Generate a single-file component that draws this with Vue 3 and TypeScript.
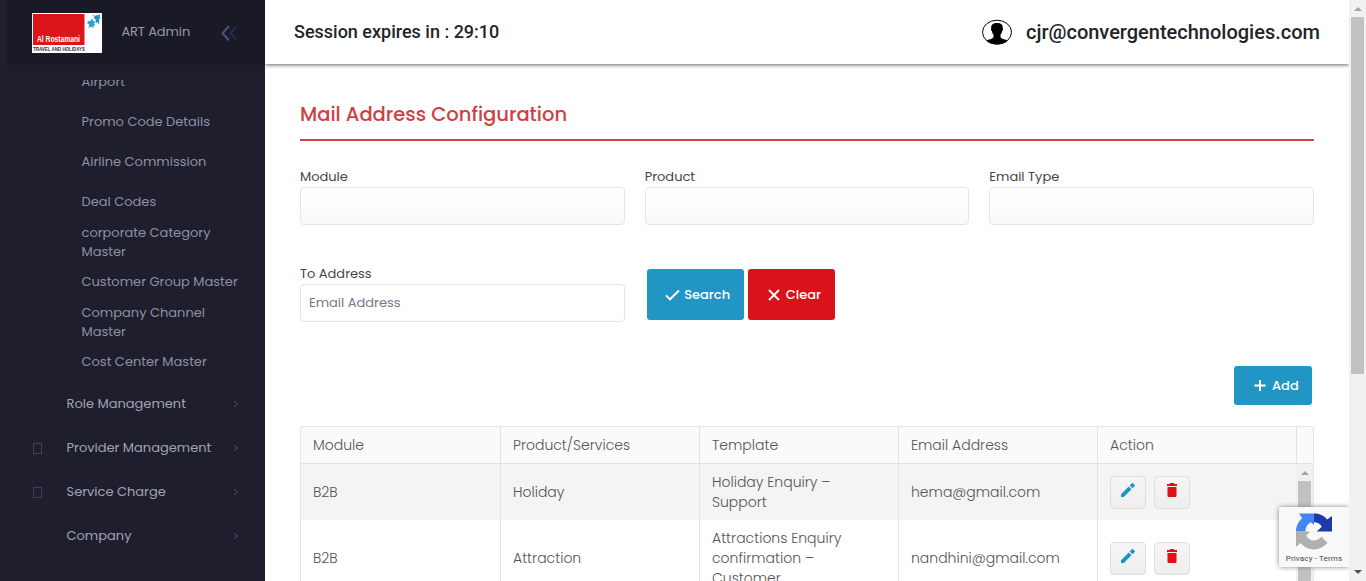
<script setup lang="ts">
interface MenuEntry {
  label: string
  glyph: boolean
}

interface MailRow {
  module: string
  product: string
  template: string
  email: string
}

const subItems: string[] = [
  'Airport',
  'Promo Code Details',
  'Airline Commission',
  'Deal Codes',
  'corporate Category\nMaster',
  'Customer Group Master',
  'Company Channel\nMaster',
  'Cost Center Master',
]

const menu: MenuEntry[] = [
  { label: 'Role Management', glyph: false },
  { label: 'Provider Management', glyph: true },
  { label: 'Service Charge', glyph: true },
  { label: 'Company', glyph: false },
]

const selects: string[] = ['Module', 'Product', 'Email Type']
const columns: string[] = ['Module', 'Product/Services', 'Template', 'Email Address', 'Action']

const rows: MailRow[] = [
  { module: 'B2B', product: 'Holiday', template: 'Holiday Enquiry –\nSupport', email: 'hema@gmail.com' },
  { module: 'B2B', product: 'Attraction', template: 'Attractions Enquiry\nconfirmation –\nCustomer', email: 'nandhini@gmail.com' },
]
</script>

<template>
  <div class="page">
    <aside class="sidebar">
      <div class="brand">
        <svg class="logo" viewBox="0 0 70 40" width="70" height="40">
          <rect width="70" height="40" fill="#fff" />
          <rect x="1" y="1" width="51.5" height="31" fill="#dc151a" />
          <text x="5" y="29" class="logo-name" textLength="43" lengthAdjust="spacingAndGlyphs">Al Rostamani</text>
          <text x="1" y="37.500" class="logo-tag" textLength="52" lengthAdjust="spacingAndGlyphs">TRAVEL AND HOLIDAYS</text>
          <path d="M55 7.500l3.200.7 2.100-2.700 1.200 2.700 3 .3-2.500 2 1.500 2-2.200.3.200 2.700-2.300-2-2.700 1.500.8-3.500-2.500-1 1.700-1.200z" fill="#2ea3cc" />
          <path d="M60 2.200l3.500.6 4.800-1.600-.8 2 1 1.500-1.500 1.800.3 5-2-2.500-.8 1.500-.7-3.500-2-2.300 1-1z" fill="#2491be" />
        </svg>
        <span class="brand-name">ART Admin</span>
        <svg class="collapse" viewBox="0 0 18 18" width="18" height="18" fill="none" stroke-width="2">
          <path d="M9 2.200L2.500 9.200 9 16.200" stroke="#4c4e86" />
          <path d="M16.200 3L10.300 9.200l5.900 6.200" stroke="#2b2b48" />
        </svg>
      </div>
      <nav class="menu">
        <div class="sub-list">
          <a v-for="item in subItems" :key="item" class="sub-item">{{ item }}</a>
        </div>
        <a v-for="entry in menu" :key="entry.label" class="menu-item">
          <span class="menu-glyph"><i v-if="entry.glyph" class="box"></i></span>
          <span class="menu-label">{{ entry.label }}</span>
          <svg class="chevron" viewBox="0 0 6 8" width="6" height="8" fill="none" stroke="#4a4c74"><path d="M1 1l3.500 3L1 7" /></svg>
        </a>
      </nav>
    </aside>

    <main class="main">
      <header class="topbar">
        <span class="session">Session expires in : 29:10</span>
        <div class="user">
          <svg viewBox="0 0 30 26" width="30" height="26">
            <ellipse cx="15" cy="13.200" rx="14.500" ry="12" fill="#fff" stroke="#000" stroke-width="1" />
            <path d="M15 4c4 0 6 1.800 5.800 4.900.4 1.500 0 2.700-.7 3.300-.4 1.900-1 2.900-1.600 3.500v2.600c1.300 1.900 5.200 2.100 7.100 3.400-2.600 2.700-6.500 3.600-10.600 3.600S7 24.400 4.400 21.700c1.900-1.300 5.800-1.500 7.100-3.400v-2.600c-.6-.6-1.200-1.600-1.600-3.500-.7-.6-1.100-1.800-.7-3.300C9 5.800 11 4 15 4z" />
          </svg>
          <span class="user-mail">cjr@convergentechnologies.com</span>
        </div>
      </header>

      <section class="content">
        <h1 class="title">Mail Address Configuration</h1>

        <div class="fields">
          <label v-for="name in selects" :key="name" class="field">
            <span class="field-label">{{ name }}</span>
            <span class="control select"></span>
          </label>
        </div>

        <div class="fields second">
          <label class="field">
            <span class="field-label">To Address</span>
            <input class="control" type="text" placeholder="Email Address" />
          </label>
          <div class="actions">
            <button class="btn search" type="button">
              <svg viewBox="0 0 15 12" width="15" height="12" fill="none" stroke="#fff" stroke-width="1.900"><path d="M1 6.300l4 4L14 1.500" /></svg>
              <span>Search</span>
            </button>
            <button class="btn clear" type="button">
              <svg viewBox="0 0 12 12" width="12" height="12" fill="none" stroke="#fff" stroke-width="1.900"><path d="M1 1l10 10M11 1L1 11" /></svg>
              <span>Clear</span>
            </button>
          </div>
        </div>

        <div class="add-row">
          <button class="btn add" type="button">
            <svg viewBox="0 0 12 12" width="12" height="12" fill="none" stroke="#fff" stroke-width="2"><path d="M6 0v11M.5 5.500h11" /></svg>
            <span>Add</span>
          </button>
        </div>

        <div class="grid">
          <div class="grid-head">
            <div v-for="col in columns" :key="col" class="cell">{{ col }}</div>
            <div class="head-end"></div>
          </div>
          <div class="grid-body">
            <div class="grid-rows">
              <div v-for="row in rows" :key="row.email" class="grid-row">
                <div class="cell">{{ row.module }}</div>
                <div class="cell">{{ row.product }}</div>
                <div class="cell">{{ row.template }}</div>
                <div class="cell">{{ row.email }}</div>
                <div class="cell tools">
                  <button class="tool" type="button" aria-label="Edit">
                    <svg viewBox="0 0 14 14" width="14" height="14" fill="#1f93c6"><path d="M0 11.200v2.800h2.800l7.700-7.700-2.800-2.800zM8.700 2.500l2.800 2.800 2.200-2.200c.3-.3.300-.7 0-1L11.900.3c-.3-.3-.7-.3-1 0z" /></svg>
                  </button>
                  <button class="tool" type="button" aria-label="Delete">
                    <svg viewBox="0 0 10 14" width="10" height="14" fill="#db1218"><path d="M.5 4v8.400c0 .9.600 1.600 1.500 1.600h6c.9 0 1.500-.7 1.500-1.600V4zM0 .9v2h10v-2H7.500L6.800 0H3.200L2.500.9z" /></svg>
                  </button>
                </div>
              </div>
            </div>
            <div class="scrollbar">
              <svg class="arrow" viewBox="0 0 8 4" width="8" height="4" fill="#a3a3a3"><path d="M0 4l4-4 4 4z" /></svg>
              <div class="thumb"></div>
            </div>
          </div>
        </div>
      </section>

      <div class="captcha">
        <svg viewBox="0 0 38 38" width="38" height="38">
          <path d="M19 .5c5.500 0 10.200 2 13.400 6.200L37.500 3v16H21.800l5.200-5c-1.600-2.800-4-4.500-8-4.500z" fill="#1c3aa9" />
          <path d="M19 .5v11.700l-3.200-2.600c-3.300 1.500-5.500 4.600-5.600 9.400H.5C.5 13.500 2.800 8.700 6.900 5.300L3.500.5z" fill="#4285f4" />
          <path d="M.5 19h14.500l-4 4.300c3.500 5.900 10.600 6.800 15.600 1.200l6.400 6.300C24.500 40 12.300 39.200 5.300 30.700L.5 35z" fill="#b0b0b0" />
        </svg>
        <span>Privacy - Terms</span>
      </div>
    </main>

    <div class="scrollbar page-scroll">
      <svg class="arrow" viewBox="0 0 8 4" width="8" height="4" fill="#a3a3a3"><path d="M0 4l4-4 4 4z" /></svg>
      <div class="thumb"></div>
      <svg class="arrow-down" viewBox="0 0 8 4" width="8" height="4" fill="#505050"><path d="M0 0l4 4 4-4z" /></svg>
    </div>
  </div>
</template>

<style>
html,
body {
  overflow: hidden;
}
</style>

<style scoped>
* {
  box-sizing: border-box;
}
.page {
  display: flex;
  height: 100vh;
  overflow: hidden;
  background: #fff;
  font-family: Poppins, Inter, "Liberation Sans", sans-serif;
  font-size: 13px;
}
.sidebar {
  flex: none;
  width: 265px;
  height: 100%;
  background: #1f1e2d;
  overflow: hidden;
}
.brand {
  display: flex;
  align-items: center;
  height: 65px;
  margin-left: 7px;
  padding-left: 25px;
  background: #1a1a26;
}
.logo-name {
  font: bold 8.200px "Liberation Sans", sans-serif;
  fill: #fff;
}
.logo-tag {
  font: bold 5px "Liberation Sans", sans-serif;
  fill: #333;
}
.brand-name {
  width: 80px;
  margin: 0 19px 2px;
  padding-left: 0.4px;
  color: #9899ac;
  line-height: 20px;
  letter-spacing: -0.1px;
  white-space: nowrap;
}
.menu {
  height: 501px;
  margin-top: 15px;
  overflow: hidden;
}
.sub-list {
  margin-top: -19px;
}
.sub-item {
  display: flex;
  align-items: center;
  height: 40px;
  padding: 1px 0 0 81.5px;
  color: #8d90a8;
  line-height: 19px;
  white-space: pre-line;
}
.menu-item {
  display: flex;
  align-items: center;
  height: 44px;
  padding: 0 26px 0 33px;
  color: #a2a3b7;
}
.menu-glyph {
  width: 33.5px;
}
.box {
  display: block;
  width: 9px;
  height: 11px;
  margin-top: 2px;
  border: 1px solid #3d3c61;
}
.menu-label {
  flex: 1;
  padding-top: 1px;
}
.chevron {
  margin-top: 1px;
}
.main {
  position: relative;
  flex: 1;
  min-width: 0;
  height: 100%;
  overflow: hidden;
}
.topbar {
  display: flex;
  align-items: center;
  justify-content: space-between;
  height: 64px;
  padding: 0 29px 0 29px;
  box-shadow: 0 1px 4px rgba(0, 0, 0, 0.6);
  font-family: Roboto, sans-serif;
  color: #212529;
}
.session {
  padding-bottom: 1px;
  font-size: 18px;
  font-weight: 500;
}
.user {
  display: flex;
  align-items: center;
  gap: 14px;
}
.user-mail {
  font-size: 20px;
  font-weight: 500;
}
.content {
  padding: 36px 35px 0;
}
.title {
  height: 41px;
  margin: 0;
  border-bottom: 2px solid #d04546;
  color: #d04043;
  font-size: 19.5px;
  font-weight: 500;
  line-height: 30px;
}
.fields {
  display: grid;
  grid-template-columns: repeat(3, 1fr);
  gap: 20px;
  margin-top: 26px;
}
.second {
  margin-top: 39px;
}
.field {
  display: block;
}
.field-label {
  display: block;
  height: 20px;
  color: #454545;
  line-height: 19px;
}
.control {
  display: block;
  width: 100%;
  height: 38px;
  padding: 0 8px;
  border: 1px solid #e2e5ec;
  border-radius: 4px;
  background: #fff;
  font: inherit;
  letter-spacing: inherit;
  outline: none;
}
.control::placeholder {
  color: #74788d;
  opacity: 1;
}
.select {
  background: linear-gradient(#fff, #f9f9f9);
}
.actions {
  display: flex;
  gap: 4px;
  padding: 5px 0 0 2px;
}
.btn {
  display: flex;
  align-items: center;
  height: 51px;
  padding: 0;
  border: 0;
  border-radius: 3px;
  background: #2196c5;
  color: #fff;
  font: inherit;
  font-weight: 500;
}
.search {
  gap: 4px;
  width: 97px;
  padding-left: 18.5px;
}
.clear {
  gap: 6px;
  width: 87px;
  padding-left: 20px;
  background: #da1219;
}
.add-row {
  display: flex;
  justify-content: flex-end;
  padding: 44px 2px 21px 0;
}
.add {
  gap: 6px;
  width: 78px;
  height: 39px;
  padding-left: 20px;
}
.grid {
  border: 1px solid #e6e6e6;
  color: #555;
  font-size: 14px;
  font-weight: 300;
  line-height: 20px;
}
.grid-head {
  display: flex;
  height: 37px;
  border-bottom: 1px solid #e2e2e2;
  background: #fafafa;
}
.cell {
  display: flex;
  align-items: center;
  width: 199px;
  padding-left: 12px;
  border-left: 1px solid #e3e3e3;
  white-space: pre-line;
}
.cell:first-child {
  border-left: 0;
}
.head-end {
  width: 17px;
  border-left: 1px solid #e3e3e3;
}
.grid-body {
  display: flex;
}
.grid-rows {
  width: 995px;
}
.grid-row {
  display: flex;
  min-height: 56px;
  padding: 0;
}
.grid-row .cell {
  padding-top: 8px;
  padding-bottom: 8px;
}
.grid-row:first-child {
  background: #f4f4f4;
}
.tools {
  gap: 8px;
}
.tool {
  display: flex;
  align-items: center;
  justify-content: center;
  width: 36px;
  height: 33px;
  padding: 0 0 4px;
  border: 1px solid #dfdfdf;
  border-radius: 4px;
  background: linear-gradient(#f5f5f5, #eee);
}
.scrollbar {
  display: flex;
  flex: none;
  flex-direction: column;
  align-items: center;
  width: 17px;
  background: #f1f1f1;
}
.arrow {
  display: block;
  flex: none;
  margin: 7px 0 6px;
}
.thumb {
  flex: 1;
  width: 13px;
  background: #c1c1c1;
}
.page-scroll {
  height: 100%;
}
.page-scroll .thumb {
  flex: none;
  height: 357px;
}
.arrow-down {
  display: block;
  margin: auto 0 7px;
}
.captcha {
  position: absolute;
  top: 507px;
  right: 0;
  display: flex;
  flex-direction: column;
  align-items: center;
  width: 70px;
  height: 60px;
  padding-top: 6px;
  border-radius: 2px 0 0 2px;
  background: #f9f9f9;
  box-shadow: 0 0 5px #808080;
  color: #444;
  font: 8px/17px Roboto, sans-serif;
  letter-spacing: 0.15px;
  white-space: nowrap;
}
</style>
